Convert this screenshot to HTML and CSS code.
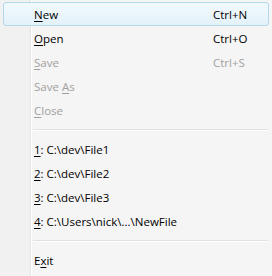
FILE: index.html
```html
<!DOCTYPE html>
<html>
<head>
<meta charset="utf-8">
<link rel="stylesheet" href="styles.css">
</head>
<body>
<div class="menu">
  <div class="item hot"><span class="label"><u>N</u>ew</span><span class="key">Ctrl+N</span></div>
  <div class="item"><span class="label"><u>O</u>pen</span><span class="key">Ctrl+O</span></div>
  <div class="item off"><span class="label"><u>S</u>ave</span><span class="key">Ctrl+S</span></div>
  <div class="item off"><span class="label">Save <u>A</u>s</span></div>
  <div class="item off"><span class="label"><u>C</u>lose</span></div>
  <div class="sep"></div>
  <div class="item"><span class="label"><u>1</u>: C:\dev\File1</span></div>
  <div class="item"><span class="label"><u>2</u>: C:\dev\File2</span></div>
  <div class="item"><span class="label"><u>3</u>: C:\dev\File3</span></div>
  <div class="item"><span class="label"><u>4</u>: C:\Users\nick\...\NewFile</span></div>
  <div class="sep"></div>
  <div class="item"><span class="label">E<u>x</u>it</span></div>
</div>
</body>
</html>
```
FILE: styles.css
```css
html, body {
  margin: 0;
  padding: 0;
  background: #f5f5f5;
}
.menu {
  width: 272px;
  height: 276px;
  box-sizing: border-box;
  padding: 2px 0 0;
  display: flex;
  flex-direction: column;
  font-family: "Open Sans", "Noto Sans", sans-serif;
  font-size: 11.5px;
  color: #000;
  background: linear-gradient(to right, #f1f1f1 0, #f1f1f1 30px, #e2e3e3 30px, #e2e3e3 31px, #ffffff 31px, #ffffff 32px, #f5f5f5 32px);
}
.item {
  flex: none;
  height: 24px;
  margin: 0 3px;
  padding: 0 0 0 30px;
  border: 1px solid transparent;
  border-radius: 3px;
  display: flex;
  align-items: center;
  box-sizing: border-box;
  white-space: nowrap;
}
.item.hot {
  border-color: #b0d9ec;
  background: linear-gradient(to bottom, #f2f9fc, #e3f1f9);
}
.label {
  flex: 1;
}
.key {
  width: 55px;
}
.off {
  color: #a0a0a0;
}
u {
  text-underline-offset: 2px;
}
.sep {
  flex: none;
  height: 2px;
  margin: 7px 4px 6px 33px;
  border-top: 1px solid #e0e0e0;
  border-bottom: 1px solid #ffffff;
  box-sizing: border-box;
}
```
